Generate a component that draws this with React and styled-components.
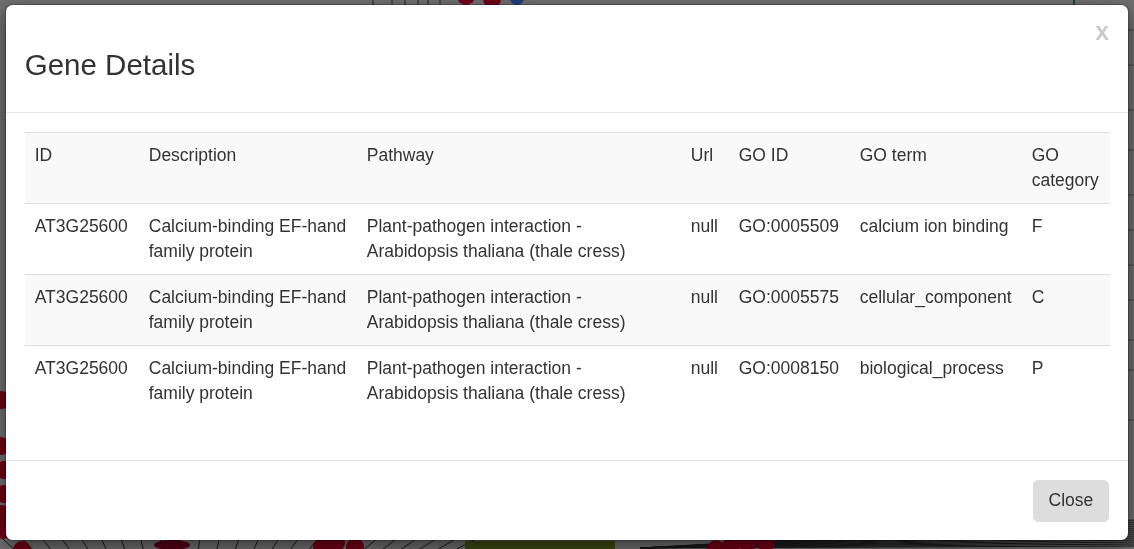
import React from 'react';
import styled, { createGlobalStyle } from 'styled-components';

const GlobalStyle = createGlobalStyle`
    html, body {
        margin: 0;
        padding: 0;
        width: 100%;
        height: 100%;
        overflow: hidden;
        background: #e0e0e0;
    }
    body {
        font-family: "Liberation Sans", Arial, Helvetica, sans-serif;
        color: #333;
    }
`;

// network graph that sits behind the modal backdrop
const GraphCanvas = styled.svg`
    position: fixed;
    inset: 0;
    width: 100%;
    height: 100%;
`;

const Backdrop = styled.div`
    position: fixed;
    inset: 0;
    background: rgba(0, 0, 0, 0.5);
`;

const Overlay = styled.div`
    position: fixed;
    inset: 0;
    padding: 4px 5px 0 5px;
`;

const Dialog = styled.div`
    width: 1124px;
    box-sizing: border-box;
    background: #fff;
    border: 1px solid rgba(0, 0, 0, 0.2);
    border-radius: 7.5px;
    box-shadow: 0 6px 18px rgba(0, 0, 0, 0.5);
    background-clip: padding-box;
`;

const Header = styled.div`
    padding: 18.75px;
    border-bottom: 1px solid #e5e5e5;
    &::after {
        content: '';
        display: block;
        clear: both;
    }
`;

const CloseX = styled.button`
    float: right;
    margin-top: -5px;
    padding: 0;
    border: 0;
    background: transparent;
    font-family: "Liberation Sans", Arial, sans-serif;
    font-size: 25px;
    font-weight: bold;
    line-height: 1;
    color: #000;
    opacity: 0.2;
    cursor: pointer;
`;

const Title = styled.h4`
    margin: 25px 0 12.5px;
    font-size: 29.5px;
    font-weight: 500;
    line-height: 1.1;
    color: #333;
`;

const Body = styled.div`
    padding: 18.75px;
`;

const Table = styled.table`
    width: 100%;
    border-collapse: collapse;
    border-spacing: 0;
    margin-bottom: 25px;
    font-size: 17.5px;
    line-height: 25px;
    table-layout: fixed;
`;

const Row = styled.tr`
    background: ${(p) => (p.$striped ? '#f9f9f9' : 'transparent')};
`;

const Cell = styled.td`
    padding: 10px;
    vertical-align: top;
    border-top: 1px solid #ddd;
    text-align: left;
    font-weight: normal;
    ${(p) => (p.$w ? `width: ${p.$w}px;` : '')}
`;

const Footer = styled.div`
    padding: 18.75px;
    text-align: right;
    border-top: 1px solid #e5e5e5;
`;

const Button = styled.button`
    display: inline-block;
    padding: 7.5px 15px;
    font-family: "Liberation Sans", Arial, sans-serif;
    font-size: 17.5px;
    line-height: 25px;
    color: #333;
    background: #ddd;
    border: 1px solid #ddd;
    border-radius: 5px;
    cursor: pointer;
`;

// content widths (cell padding of 10px each side comes on top)
const columns = [
    { label: 'ID', w: 94 },
    { label: 'Description', w: 198 },
    { label: 'Pathway', w: 304 },
    { label: 'Url', w: 28 },
    { label: 'GO ID', w: 101 },
    { label: 'GO term', w: 152 },
    { label: 'GO category', w: 68 },
];

const rows = [
    ['GO:0005509', 'calcium ion binding', 'F'],
    ['GO:0005575', 'cellular_component', 'C'],
    ['GO:0008150', 'biological_process', 'P'],
];

const redDots = [
    [2, 400], [1, 446], [4, 470], [4, 494], [2, 514], [3, 530],
    [22, 550], [322, 547], [336, 543], [355, 547],
    [716, 549], [732, 544], [748, 543], [766, 543], [466, -4], [492, -1],
];

const Graph = () => (
    <GraphCanvas>
        {[...Array(26)].map((_, i) => (
            <line key={'a' + i} x1={180} y1={700} x2={-40 + i * 22} y2={520} stroke="#333" strokeWidth="1" />
        ))}
        {[...Array(14)].map((_, i) => (
            <line key={'b' + i} x1={640} y1={548} x2={1134} y2={520 + i * 2} stroke="#333" strokeWidth="1" />
        ))}
        {[373, 392, 405, 418, 428, 440].map((x) => (
            <line key={'v' + x} x1={x} y1={0} x2={x} y2={8} stroke="#444" strokeWidth="1" />
        ))}
        {[30, 65, 110, 150, 195, 230, 265, 300, 340, 370, 420].map((y) => (
            <line key={'h' + y} x1={1125} y1={y} x2={1134} y2={y} stroke="#888" strokeWidth="1" />
        ))}
        <line x1={1074} y1={0} x2={1074} y2={8} stroke="#3a9a3a" strokeWidth="2" />
        <rect x={465} y={541} width={150} height={20} fill="#7a9420" />
        <ellipse cx={172} cy={545} rx={18} ry={5} fill="#b00030" />
        {redDots.map(([x, y], i) => (
            <circle key={'r' + i} cx={x} cy={y} r={9} fill="#e8002f" />
        ))}
        <circle cx={517} cy={-2} r={7} fill="#3f7fff" />
    </GraphCanvas>
);

export default function App() {
    return (
        <>
            <GlobalStyle />
            <Graph />
            <Backdrop />
            <Overlay>
                <Dialog>
                    <Header>
                        <CloseX>x</CloseX>
                        <Title>Gene Details</Title>
                    </Header>
                    <Body>
                        <Table>
                            <tbody>
                                <Row $striped>
                                    {columns.map((c) => (
                                        <Cell as="th" key={c.label} $w={c.w}>
                                            {c.label}
                                        </Cell>
                                    ))}
                                </Row>
                                {rows.map((r, i) => (
                                    <Row key={r[0]} $striped={i % 2 === 1}>
                                        <Cell>AT3G25600</Cell>
                                        <Cell>Calcium-binding EF-hand family protein</Cell>
                                        <Cell>Plant-pathogen interaction - Arabidopsis thaliana (thale cress)</Cell>
                                        <Cell>null</Cell>
                                        <Cell>{r[0]}</Cell>
                                        <Cell>{r[1]}</Cell>
                                        <Cell>{r[2]}</Cell>
                                    </Row>
                                ))}
                            </tbody>
                        </Table>
                    </Body>
                    <Footer>
                        <Button>Close</Button>
                    </Footer>
                </Dialog>
            </Overlay>
        </>
    );
}
